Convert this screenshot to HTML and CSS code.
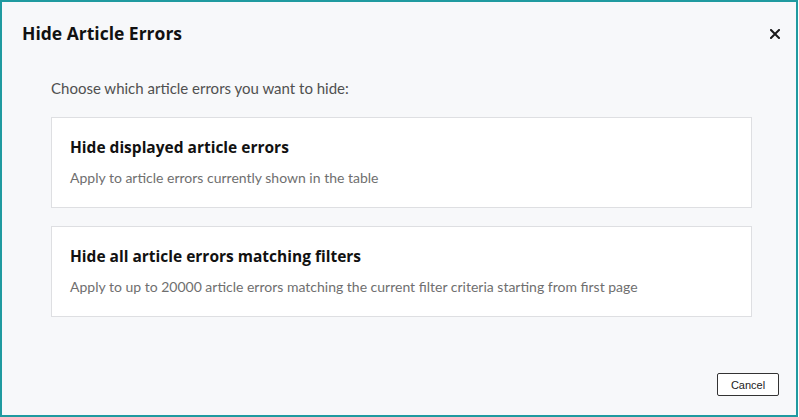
FILE: index.html
```html
<!DOCTYPE html>
<html>
<head>
<meta charset="utf-8">
<link rel="stylesheet" href="styles.css">
</head>
<body>
<div class="dialog">
  <div class="header">
    <h1 class="title">Hide Article Errors</h1>
    <button class="close" aria-label="Close">
      <svg width="10" height="10" viewBox="0 0 10 10"><path d="M1 1L9 9M9 1L1 9" stroke="#1a1a1a" stroke-width="2" stroke-linecap="square"/></svg>
    </button>
  </div>
  <div class="body">
    <p class="intro">Choose which article errors you want to hide:</p>
    <div class="option">
      <div class="option-title">Hide displayed article errors</div>
      <div class="option-desc">Apply to article errors currently shown in the table</div>
    </div>
    <div class="option">
      <div class="option-title">Hide all article errors matching filters</div>
      <div class="option-desc">Apply to up to 20000 article errors matching the current filter criteria starting from first page</div>
    </div>
  </div>
  <div class="footer">
    <button class="cancel">Cancel</button>
  </div>
</div>
</body>
</html>
```
FILE: styles.css
```css
* { box-sizing: border-box; }
html, body { margin: 0; padding: 0; background: #ffffff; }
body { font-family: Lato, "Open Sans", sans-serif; }
.dialog {
  width: 798px;
  height: 417px;
  border: 2px solid #1f9aa0;
  background: #f7f8fa;
  display: flex;
  flex-direction: column;
}
.header {
  display: flex;
  justify-content: space-between;
  align-items: flex-start;
  padding: 19px 16px 0 20px;
  height: 62px;
}
.title {
  margin: 0;
  font-family: "Open Sans", Lato, sans-serif;
  font-size: 17.5px;
  font-weight: 700;
  color: #111;
  line-height: 24px;
}
.close {
  border: 0;
  background: transparent;
  padding: 0;
  margin-top: 8px;
  width: 10px;
  height: 10px;
  display: flex;
}
.body {
  padding: 0 44px 0 49px;
  flex: 1;
}
.intro {
  margin: 14px 0 19px;
  font-size: 15px;
  color: #505050;
  line-height: 20px;
}
.option {
  background: #fff;
  border: 1px solid #dedfe2;
  height: 91px;
  padding: 19px 18px;
  margin-bottom: 18px;
}
.option-title {
  font-family: "Open Sans", Lato, sans-serif;
  font-size: 15.5px;
  font-weight: 700;
  color: #111;
  line-height: 20px;
}
.option-desc {
  margin-top: 11px;
  font-size: 14px;
  color: #6f6f6f;
  line-height: 20px;
}
.footer {
  display: flex;
  justify-content: flex-end;
  padding: 0 17px 19px 0;
}
.cancel {
  width: 62px;
  height: 23px;
  border: 1px solid #333;
  border-radius: 2px;
  background: #fff;
  font-family: "Liberation Sans", Arial, sans-serif;
  font-size: 11px;
  color: #222;
  padding: 0;
}
```
